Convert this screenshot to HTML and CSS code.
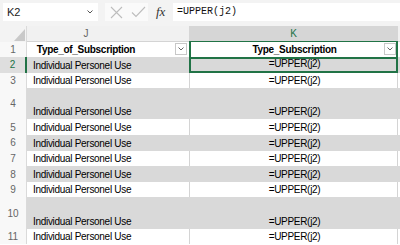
FILE: index.html
```html
<!DOCTYPE html>
<html lang="en">
<head>
    <meta charset="UTF-8">
    <meta name="viewport" content="width=device-width, initial-scale=1.0">
    <title>Type_Subscription</title>
    <link rel="stylesheet" href="styles.css">
</head>
<body>
    <!-- formula bar -->
    <div class="toolbar">
        <div class="namebox">
            <span>K2</span>
            <svg class="chev" width="6" height="4" viewBox="0 0 6 4"><path d="M0.5 0.5 L3 3 L5.5 0.5" fill="none" stroke="#555" stroke-width="1"/></svg>
        </div>
        <div class="edit-btns">
            <svg width="13" height="13" viewBox="0 0 13 13"><path d="M1 1 L12 12 M12 1 L1 12" stroke="#bdbdbd" stroke-width="1.1" fill="none"/></svg>
            <svg width="15" height="12" viewBox="0 0 15 12"><path d="M1 6.5 L5 10.5 L14 1" stroke="#bdbdbd" stroke-width="1.1" fill="none"/></svg>
        </div>
        <div class="fx">fx</div>
        <div class="formula">=UPPER(j2)</div>
    </div>

    <!-- grid -->
    <div class="sheet">
        <div class="row colhead">
            <div class="corner"><svg width="11" height="12" viewBox="0 0 11 12"><path d="M11 0 L11 12 L0 12 Z" fill="#c9c9c9"/></svg></div>
            <div class="col col-j">J</div>
            <div class="col active">K</div>
            <div class="col col-l"></div>
        </div>

        <div class="row">
            <div class="rh">1</div>
            <div class="cell head-j">
                <span class="head-text">Type_of_Subscription</span>
                <span class="filter"><svg width="6" height="4" viewBox="0 0 6 4"><path d="M0.5 0.5 L3 3 L5.5 0.5" fill="none" stroke="#666" stroke-width="1"/></svg></span>
            </div>
            <div class="cell k head-k sel-top">
                <span class="head-text">Type_Subscription</span>
                <span class="filter"><svg width="6" height="4" viewBox="0 0 6 4"><path d="M0.5 0.5 L3 3 L5.5 0.5" fill="none" stroke="#666" stroke-width="1"/></svg></span>
            </div>
            <div class="cell l"></div>
        </div>

        <div class="row band">
            <div class="rh active">2</div>
            <div class="cell">Individual Personel Use</div>
            <div class="cell k center sel">=UPPER(j2)</div>
            <div class="cell l"></div>
        </div>
        <div class="row">
            <div class="rh">3</div>
            <div class="cell">Individual Personel Use</div>
            <div class="cell k center">=UPPER(j2)</div>
            <div class="cell l"></div>
        </div>
        <div class="row band tall">
            <div class="rh">4</div>
            <div class="cell">Individual Personel Use</div>
            <div class="cell k center">=UPPER(j2)</div>
            <div class="cell l"></div>
        </div>
        <div class="row">
            <div class="rh">5</div>
            <div class="cell">Individual Personel Use</div>
            <div class="cell k center">=UPPER(j2)</div>
            <div class="cell l"></div>
        </div>
        <div class="row band">
            <div class="rh">6</div>
            <div class="cell">Individual Personel Use</div>
            <div class="cell k center">=UPPER(j2)</div>
            <div class="cell l"></div>
        </div>
        <div class="row">
            <div class="rh">7</div>
            <div class="cell">Individual Personel Use</div>
            <div class="cell k center">=UPPER(j2)</div>
            <div class="cell l"></div>
        </div>
        <div class="row band">
            <div class="rh">8</div>
            <div class="cell">Individual Personel Use</div>
            <div class="cell k center">=UPPER(j2)</div>
            <div class="cell l"></div>
        </div>
        <div class="row">
            <div class="rh">9</div>
            <div class="cell">Individual Personel Use</div>
            <div class="cell k center">=UPPER(j2)</div>
            <div class="cell l"></div>
        </div>
        <div class="row band tall">
            <div class="rh">10</div>
            <div class="cell">Individual Personel Use</div>
            <div class="cell k center">=UPPER(j2)</div>
            <div class="cell l"></div>
        </div>
        <div class="row">
            <div class="rh">11</div>
            <div class="cell">Individual Personel Use</div>
            <div class="cell k center">=UPPER(j2)</div>
            <div class="cell l"></div>
        </div>
    </div>
</body>
</html>
```

FILE: styles.css
```css
/* page */
body {
    margin: 0;
    width: 400px;
    height: 245px;
    overflow: hidden;
    background: #fff;
    font-family: "Liberation Sans", Arial, sans-serif;
    color: #000;
}

/* formula bar */
.toolbar {
    display: flex;
    align-items: flex-start;
    height: 26px;
    padding-top: 3px;
    box-sizing: border-box;
    background: #f3f3f3;
}

.namebox {
    display: flex;
    align-items: center;
    justify-content: space-between;
    width: 95px;
    height: 18px;
    margin-left: 3px;
    padding: 0 5px 0 4px;
    box-sizing: border-box;
    background: #fff;
    font-size: 11px;
    color: #222;
}

.edit-btns {
    display: flex;
    align-items: center;
    gap: 8px;
    width: 43px;
    height: 18px;
    margin-left: 7px;
    padding-left: 5px;
    box-sizing: border-box;
    background: #fafafa;
}

.fx {
    width: 25px;
    height: 18px;
    line-height: 18px;
    padding-left: 8px;
    box-sizing: border-box;
    font-family: "Liberation Serif", serif;
    font-style: italic;
    font-size: 13px;
    color: #333;
}

.formula {
    flex: 1;
    height: 18px;
    line-height: 18px;
    padding-left: 4px;
    background: #fff;
    font-family: "Liberation Mono", monospace;
    font-size: 10px;
    color: #111;
}

/* sheet grid */
.row {
    display: grid;
    grid-template-columns: 27px 162px 209px 1fr;
    height: 15.6px;
}

.row.tall {
    height: 31.2px;
}

.colhead {
    height: 15.5px;
}

.corner {
    display: flex;
    align-items: flex-end;
    justify-content: flex-end;
    padding: 0 1px 1px 0;
    background: #f3f3f3;
    border-right: 1px solid #dadada;
}

.col {
    display: flex;
    align-items: center;
    justify-content: center;
    font-size: 10px;
    color: #666;
    background: #f1f1f1;
    border-bottom: 1px solid #d4d4d4;
    box-sizing: border-box;
}

.col-j {
    padding-right: 44px;
}

.col.active {
    background: #d6d6d6;
    color: #217346;
    border-bottom: 1px solid #217346;
}

.rh {
    display: flex;
    align-items: center;
    justify-content: center;
    font-size: 10px;
    color: #666;
    background: #f8f8f8;
    border-right: 1px solid #dadada;
    box-sizing: border-box;
}

.rh.active {
    background: #dedede;
    color: #217346;
    border-right: 2px solid #217346;
}

.cell {
    display: flex;
    align-items: flex-end;
    padding: 0 0 1px 6px;
    box-sizing: border-box;
    font-size: 10px;
    line-height: 13px;
    letter-spacing: -0.3px;
    white-space: nowrap;
    overflow: hidden;
}

.cell.k {
    border-left: 1px solid #d4d4d4;
    border-right: 1px solid #d4d4d4;
}

.cell.center {
    justify-content: center;
    padding-left: 2px;
}

.band .cell {
    background: #d9d9d9;
    border-color: #d9d9d9;
}

/* header row with filter buttons */
.head-j,
.head-k {
    align-items: center;
    padding: 0 2px 0 0;
    font-weight: bold;
}

.head-j .head-text {
    width: 118px;
    text-align: center;
}

.head-k {
    padding-right: 0;
}

.head-k .head-text {
    flex: 1;
    text-align: center;
    padding-left: 14px;
}

.filter {
    display: flex;
    align-items: center;
    justify-content: center;
    width: 12px;
    height: 12px;
    margin-left: auto;
    background: #fff;
    border: 1px solid #c8c8c8;
    box-sizing: border-box;
}

/* active cell outline */
.cell.sel-top {
    border-left: 2px solid #217346;
    border-right: 2px solid #217346;
}

.band .cell.sel {
    border: 2px solid #217346;
}
```
